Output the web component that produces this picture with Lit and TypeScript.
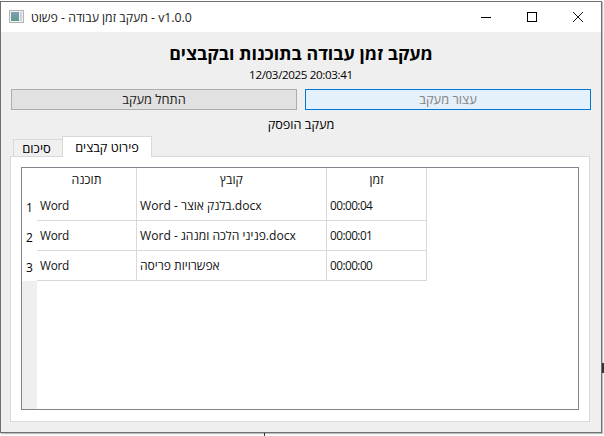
import { LitElement, html, css } from "lit";
import { customElement } from "lit/decorators.js";

const rows = [
  ["Word", "Word - בלנק אוצר.docx", "00:00:04"],
  ["Word", "Word - פניני הלכה ומנהג.docx", "00:00:01"],
  ["Word", "אפשרויות פריסה", "00:00:00"],
];

@customElement("app-root")
export class AppRoot extends LitElement {
  static styles = css`
    :host {
      display: block;
      width: 604px;
      height: 436px;
      background: #fff;
      overflow: hidden;
      position: relative;
      font-family: "Open Sans", "Noto Sans", sans-serif;
      font-size: 12px;
      color: #000;
    }
    .window {
      box-sizing: border-box;
      width: 602px;
      height: 432px;
      margin-top: 1px;
      border: 1px solid #6f6f6f;
      display: flex;
      flex-direction: column;
      background: #efefef;
      box-shadow: 1px 1px 1px rgba(0, 0, 0, 0.25);
    }
    .titlebar {
      height: 30px;
      flex: none;
      background: #fff;
      display: flex;
      align-items: center;
      padding-left: 8px;
    }
    .title {
      margin-left: 6px;
      font-size: 12.3px;
      color: #222;
    }
    .ctrls {
      margin-left: auto;
      display: flex;
    }
    .ctrl {
      width: 46px;
      height: 30px;
      display: flex;
      align-items: center;
      justify-content: center;
    }
    .content {
      flex: 1;
      display: flex;
      flex-direction: column;
      padding: 0 11px 10px 9px;
      min-height: 0;
    }
    h1 {
      margin: 9px 0 0;
      height: 24px;
      line-height: 24px;
      font-size: 17.8px;
      font-weight: 700;
      text-align: center;
      padding-left: 2px;
    }
    .date {
      margin-top: 2px;
      height: 16px;
      line-height: 16px;
      font-size: 11.6px;
      letter-spacing: -0.35px;
      text-align: center;
      padding-left: 2px;
    }
    .buttons {
      margin: 6px -1px 0 1px;
      display: grid;
      grid-template-columns: 1fr 1fr;
      gap: 8px;
    }
    .btn {
      box-sizing: border-box;
      height: 21px;
      line-height: 19px;
      font-size: 12.8px;
      text-align: center;
      border: 1px solid #adadad;
      background: #e1e1e1;
      color: #222;
    }
    .btn.focus {
      border-color: #0078d7;
      background: #e4f0fa;
      color: #838383;
    }
    .status {
      margin-top: 4px;
      height: 18px;
      line-height: 20px;
      font-size: 12.7px;
      text-align: center;
      padding-left: 2px;
    }
    .tabbar {
      margin-top: 4px;
      display: flex;
      align-items: flex-end;
      height: 20px;
      padding-left: 3px;
      position: relative;
      z-index: 1;
    }
    .tab {
      box-sizing: border-box;
      text-align: center;
      font-size: 12.7px;
      border: 1px solid #d9d9d9;
      border-bottom: 0;
    }
    .tab.off {
      width: 49px;
      height: 17px;
      line-height: 17px;
      background: #f0f0f0;
      border-right: 0;
      font-size: 13px;
      padding-right: 3px;
    }
    .tab.on {
      width: 90px;
      height: 21px;
      line-height: 20px;
      background: #fff;
      margin-bottom: -1px;
    }
    .pane {
      flex: 1;
      min-height: 0;
      box-sizing: border-box;
      border: 1px solid #d9d9d9;
      background: #fff;
      padding: 10px 10px 11px;
      display: flex;
    }
    .table {
      flex: 1;
      box-sizing: border-box;
      border: 1px solid #84848c;
      background: #fff;
      display: grid;
      grid-template-columns: 15px 100px 190px 100px 1fr;
      grid-template-rows: 23px 30px 30px 30px 1fr;
    }
    .cell,
    .head,
    .num {
      box-sizing: border-box;
      display: flex;
      align-items: center;
    }
    .head {
      justify-content: center;
      border-right: 1px solid #d9d9d9;
      font-size: 12.3px;
      color: #111;
    }
    .cell {
      padding-left: 3px;
      padding-bottom: 1px;
      border-right: 1px solid #d9d9d9;
      border-bottom: 1px solid #d9d9d9;
      white-space: nowrap;
      font-size: 11.8px;
      letter-spacing: -0.25px;
      color: #111;
    }
    .cell.file {
      font-size: 12.1px;
      letter-spacing: 0;
    }
    .cell.time {
      letter-spacing: -0.55px;
    }
    .num {
      justify-content: center;
      padding-top: 3px;
      font-size: 12px;
      background: #fff;
    }
    .gutter {
      background: #efefef;
    }
    .speck {
      position: absolute;
      background: #333;
    }
    .speck.a {
      right: 0;
      top: 363px;
      width: 2px;
      height: 10px;
    }
    .speck.b {
      left: 264px;
      top: 433px;
      width: 1px;
      height: 3px;
    }
  `;

  render() {
    const kinds = ["", "file", "time"];
    return html`
      <div class="window">
        <div class="titlebar">
          <svg width="16" height="16" viewBox="0 0 16 16">
            <defs>
              <linearGradient id="g" x1="0" y1="0" x2="0" y2="1">
                <stop offset="0" stop-color="#7f9fb5" />
                <stop offset="1" stop-color="#5f9a88" />
              </linearGradient>
            </defs>
            <rect x="0.5" y="1.5" width="14" height="12" fill="#f2f2f2" stroke="#b4b4b4" />
            <rect x="2" y="3" width="8" height="9" fill="url(#g)" />
            <rect x="11" y="3" width="2" height="9" fill="#c9d3d9" />
          </svg>
          <span class="title">מעקב זמן עבודה - פשוט - v1.0.0</span>
          <div class="ctrls">
            <div class="ctrl">
              <svg width="10" height="10" viewBox="0 0 10 10"><path d="M0 5.5H10" stroke="#000" fill="none" /></svg>
            </div>
            <div class="ctrl">
              <svg width="10" height="10" viewBox="0 0 10 10"><rect x="0.5" y="0.5" width="9" height="9" stroke="#000" fill="none" /></svg>
            </div>
            <div class="ctrl">
              <svg width="10" height="10" viewBox="0 0 10 10"><path d="M0 0L10 10M10 0L0 10" stroke="#000" stroke-width="0.9" fill="none" /></svg>
            </div>
          </div>
        </div>
        <div class="content">
          <h1>מעקב זמן עבודה בתוכנות ובקבצים</h1>
          <div class="date">12/03/2025 20:03:41</div>
          <div class="buttons">
            <div class="btn">התחל מעקב</div>
            <div class="btn focus">עצור מעקב</div>
          </div>
          <div class="status">מעקב הופסק</div>
          <div class="tabbar">
            <div class="tab off">סיכום</div>
            <div class="tab on">פירוט קבצים</div>
          </div>
          <div class="pane">
            <div class="table">
              <div></div>
              <div class="head">תוכנה</div>
              <div class="head">קובץ</div>
              <div class="head">זמן</div>
              <div></div>
              ${rows.map(
                (r, i) => html`
                  <div class="num">${i + 1}</div>
                  ${r.map((c, j) => html`<div class="cell ${kinds[j]}">${c}</div>`)}
                  <div></div>
                `
              )}
              <div class="gutter"></div>
              <div></div>
              <div></div>
              <div></div>
              <div></div>
            </div>
          </div>
        </div>
      </div>
      <div class="speck a"></div>
      <div class="speck b"></div>
    `;
  }
}
